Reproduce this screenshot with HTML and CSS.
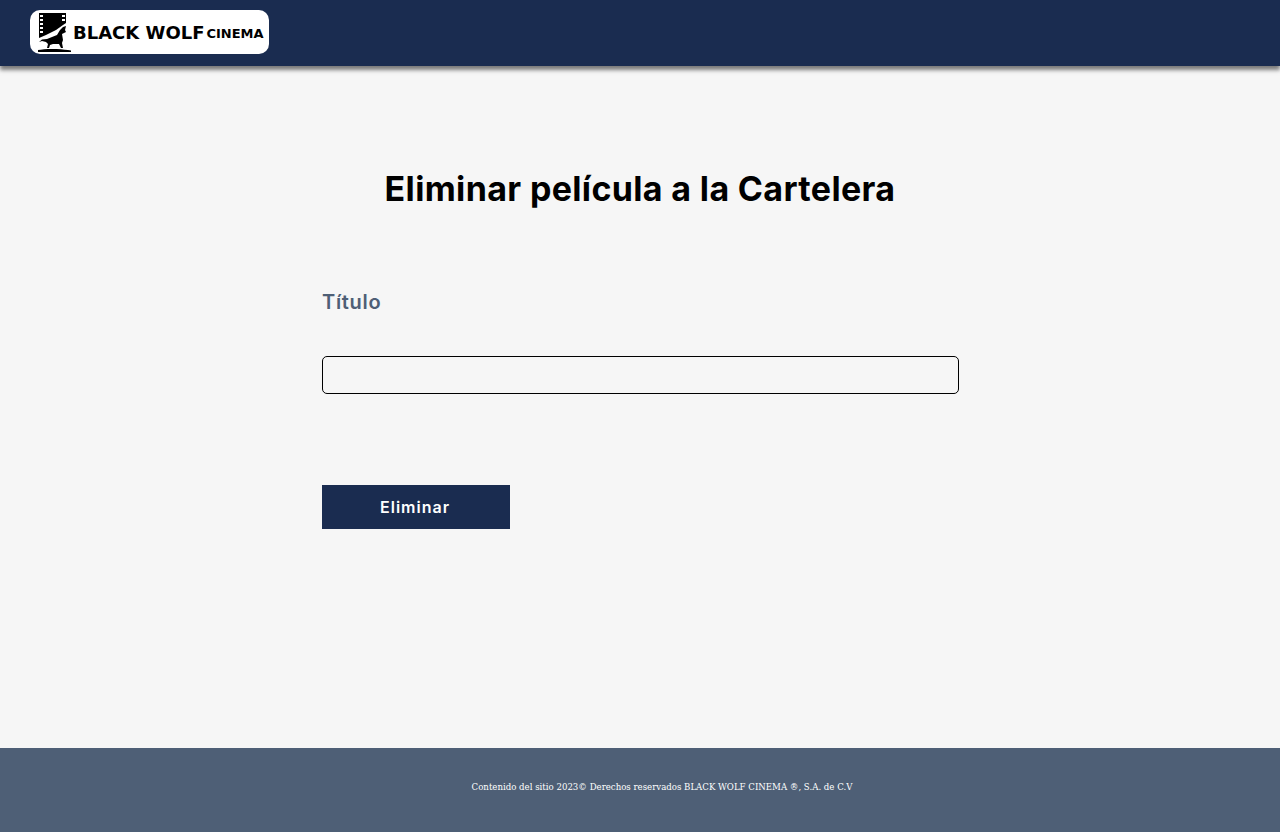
FILE: index.html
```html
<html>
  <head>
    <meta charset="utf-8">
    <link rel="stylesheet" href="styles.css">
    <title>Eliminar película</title>
  </head>
  <body>
    <header class="topbar">
      <a class="logo" href="#">
        <svg class="logo-mark" viewBox="0 0 36 44" width="36" height="44">
          <path d="M3 3H30V13L27 15L20 20L10 25L3 28Z" fill="#000"/>
          <path d="M4 5h3v2h-3zM4 9h3v2h-3zM4 13h3v2h-3zM4 17h3v2h-3zM4 21h3v2h-3zM26 5h3v2h-3zM26 9h3v2h-3z" fill="#fff"/>
          <path d="M30 16L29 20L30 22L26 24L27 30L26 33L27 38H25L23 34L17 34L14 35L13 38H11L12 34L10 32L6 31L3 32L6 29.5L11 29L16 27L21 25L24 20L27 17Z" fill="#000"/>
          <path d="M2 40C8 38.5 24 38.5 32 40L35 40.5V42H2Z" fill="#000"/>
        </svg>
        <span class="logo-name">BLACK WOLF</span>
        <span class="logo-sub">CINEMA</span>
      </a>
    </header>

    <main class="content">
      <h1>Eliminar película a la Cartelera</h1>
      <form class="movie-form">
        <label for="titulo">Título</label>
        <input id="titulo" type="text">
        <button type="button">Eliminar</button>
      </form>
    </main>

    <footer class="bottom">
      <p>Contenido del sitio 2023© Derechos reservados BLACK WOLF CINEMA ®, S.A. de C.V</p>
    </footer>
  </body>
</html>
```
FILE: styles.css
```css
* {
  box-sizing: border-box;
}

body {
  margin: 0;
  height: 832px;
  display: flex;
  flex-direction: column;
  background-color: #f6f6f6;
  font-family: "Inter", "Liberation Sans", sans-serif;
}

.topbar {
  height: 66px;
  flex-shrink: 0;
  padding: 10px 30px;
  background-color: #1a2c50;
  box-shadow: 0 4px 4px 0 rgba(0, 0, 0, 0.5);
}

.logo {
  width: 239px;
  height: 44px;
  padding-left: 6px;
  display: flex;
  align-items: center;
  background-color: #fff;
  border-radius: 10px;
  color: #000;
  text-decoration: none;
  font-family: "DejaVu Sans", sans-serif;
  font-weight: bold;
}

.logo-mark {
  flex-shrink: 0;
}

.logo-name {
  margin-left: 1px;
  font-size: 18px;
  white-space: nowrap;
}

.logo-sub {
  margin-left: 2px;
  margin-top: 3px;
  font-size: 13px;
  white-space: nowrap;
}

.content {
  flex: 1;
  padding-top: 102px;
}

h1 {
  margin: 0;
  text-align: center;
  font-size: 34px;
  line-height: 42px;
  font-weight: 700;
  letter-spacing: 0.35px;
  color: #000;
}

.movie-form {
  width: 637px;
  margin: 78px 0 0 322px;
  display: flex;
  flex-direction: column;
  align-items: flex-start;
}

label {
  font-size: 20px;
  line-height: 28px;
  font-weight: 600;
  letter-spacing: 0.7px;
  color: #4e5f76;
}

input {
  width: 100%;
  height: 38px;
  margin-top: 40px;
  background-color: transparent;
  border: solid 1px #000;
  border-radius: 5px;
}

button {
  width: 188px;
  height: 44px;
  margin-top: 91px;
  padding-right: 8px;
  background-color: #1a2c50;
  border: none;
  color: #fff;
  font-family: inherit;
  font-size: 16px;
  font-weight: 600;
  letter-spacing: 1px;
}

.bottom {
  height: 84px;
  flex-shrink: 0;
  padding: 33px 0 0 44px;
  background-color: #4e5f76;
  color: #fff;
  text-align: center;
  font-family: "DejaVu Serif", serif;
  font-size: 8.6px;
  line-height: 12px;
}

.bottom p {
  margin: 0;
}
```
